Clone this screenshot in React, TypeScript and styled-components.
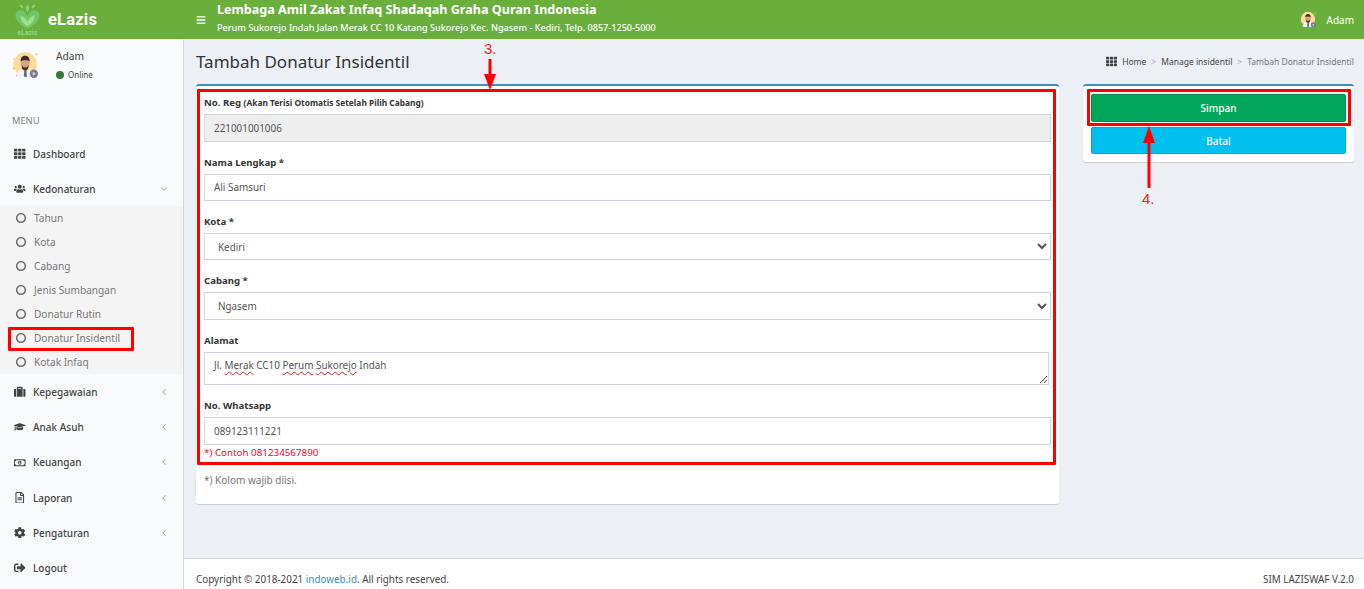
import React from "react";
import styled, { createGlobalStyle } from "styled-components";
import { FaBars, FaTh, FaUsers, FaSuitcase, FaGraduationCap, FaRegMoneyBillAlt, FaRegFileAlt, FaCog, FaSignOutAlt, FaRegCircle } from "react-icons/fa";
import { ChevronDown, ChevronLeft } from "lucide-react";

const Global = createGlobalStyle`
  html, body { margin: 0; padding: 0; background: #ecf0f5; }
  body { font-family: "Noto Sans", "Open Sans", sans-serif; color: #333; overflow: hidden; }
  * { box-sizing: border-box; }
`;

const Page = styled.div`
  position: relative;
  width: 1364px;
  height: 589px;
  display: flex;
  flex-direction: column;
  overflow: hidden;
`;
const Header = styled.header`
  height: 39px;
  flex: none;
  background: #6aae3c;
  color: #fff;
  display: flex;
  align-items: center;
`;
const Brand = styled.div`
  width: 184px;
  height: 39px;
  flex: none;
  display: flex;
  align-items: center;
  padding-left: 14px;
  gap: 7px;
  font-family: Roboto, sans-serif;
  font-weight: 700;
  font-size: 16.5px;
  letter-spacing: 0.2px;
`;
const Toggle = styled.div`
  width: 33px;
  flex: none;
  padding-left: 12px;
  display: flex;
  font-size: 10px;
`;
const TitleBlock = styled.div`
  flex: 1;
  display: flex;
  flex-direction: column;
  gap: 4px;
  padding-bottom: 5px;
`;
const OrgName = styled.div`
  font-weight: 700;
  font-size: 12.6px;
  line-height: 17px;
`;
const OrgAddress = styled.div`
  font-size: 9.1px;
  line-height: 12px;
  font-weight: 500;
`;
const TopUser = styled.div`
  display: flex;
  align-items: center;
  gap: 10px;
  padding-right: 10px;
  font-size: 10px;
`;
const Body = styled.div`
  flex: 1;
  display: flex;
  min-height: 0;
`;
const Sidebar = styled.aside`
  width: 184px;
  flex: none;
  background: #f9fafc;
  border-right: 1px solid #d2d6de;
`;
const UserPanel = styled.div`
  height: 72px;
  display: flex;
  padding: 12px 0 0 12px;
  gap: 16px;
`;
const UserInfo = styled.div`
  display: flex;
  flex-direction: column;
  margin-top: -2px;
`;
const UserName = styled.div`
  font-size: 10.2px;
  line-height: 14px;
  color: #444;
`;
const UserStatus = styled.div`
  display: flex;
  align-items: center;
  gap: 4px;
  margin-top: 6px;
  font-size: 8px;
  line-height: 12px;
  color: #444;
`;
const StatusDot = styled.span`
  width: 8px;
  height: 8px;
  border-radius: 50%;
  background: #3c763d;
`;
const MenuHeading = styled.div`
  height: 25px;
  padding-left: 12px;
  font-size: 9.3px;
  line-height: 20px;
  color: #848484;
`;
const NavItem = styled.div`
  height: 35.2px;
  display: flex;
  align-items: center;
  padding: 0 14px;
  font-size: 10px;
  font-weight: 500;
  color: #444;
`;
const NavIcon = styled.span`
  width: 19px;
  flex: none;
  display: flex;
  font-size: 11.5px;
  color: #444;
`;
const NavLabel = styled.span`
  flex: 1;
`;
const Caret = styled.span`
  display: flex;
  color: #8a8a8a;
`;
const SubMenu = styled.div`
  background: #f4f4f5;
`;
const SubItem = styled.div`
  height: 24px;
  display: flex;
  align-items: center;
  padding-left: 16px;
  gap: 8px;
  font-size: 10.1px;
  color: #777;
  svg { font-size: 10px; color: #5f5f5f; flex: none; stroke: currentColor; stroke-width: 24px; }
`;
const Main = styled.main`
  flex: 1;
  min-width: 0;
  display: flex;
  flex-direction: column;
`;
const Content = styled.div`
  flex: 1;
  padding: 0 10px 0 12px;
`;
const PageHead = styled.div`
  height: 45px;
  display: flex;
  justify-content: space-between;
  align-items: center;
`;
const PageTitle = styled.h1`
  margin: 0;
  font-size: 17px;
  font-weight: 400;
  color: #333;
`;
const Crumbs = styled.div`
  display: flex;
  align-items: center;
  gap: 5px;
  font-size: 8.5px;
  color: #444;
  svg { font-size: 11px; }
`;
const CrumbSep = styled.span`
  color: #aaa;
`;
const CrumbCurrent = styled.span`
  color: #777;
`;
const Columns = styled.div`
  display: flex;
  align-items: flex-start;
  gap: 24px;
`;
const FormBox = styled.section`
  width: 863px;
  height: 420px;
  flex: none;
  background: #fff;
  border-top: 2px solid #3c8dbc;
  border-radius: 3px;
  box-shadow: 0 1px 1px rgba(0,0,0,0.15);
  padding: 8.2px 8px 0;
`;
const SideBox = styled.section`
  width: 271px;
  height: 78px;
  flex: none;
  background: #fff;
  border-top: 2px solid #3c8dbc;
  border-radius: 3px;
  box-shadow: 0 1px 1px rgba(0,0,0,0.15);
  padding: 8px 8px 0;
  display: flex;
  flex-direction: column;
  gap: 5px;
`;
const Field = styled.div`
  margin-bottom: 12px;
`;
const Label = styled.label`
  display: block;
  height: 20px;
  font-size: 9.6px;
  line-height: 18px;
  font-weight: 700;
  color: #333;
`;
const LabelHint = styled.span`
  font-size: 8.4px;
`;
const TextInput = styled.input`
  display: block;
  width: 100%;
  height: 27.4px;
  border: 1px solid #d2d6de;
  background: ${(p) => (p.readOnly ? "#eeeeee" : "#fff")};
  padding: 0 9px;
  font-family: inherit;
  font-size: 9.9px;
  color: #555;
  outline: none;
`;
const Picker = styled.select`
  display: block;
  width: 100%;
  height: 27.4px;
  border: 1px solid #d2d6de;
  border-radius: 0;
  background: #fff;
  padding: 0 9px;
  font-family: inherit;
  font-size: 9.9px;
  color: #555;
  outline: none;
`;
const AreaBox = styled.div`
  width: 845px;
  height: 33.5px;
  border: 1px solid #d2d6de;
  padding: 5px 9px;
  font-size: 9.9px;
  line-height: 14px;
  color: #555;
  resize: vertical;
  overflow: hidden;
`;
const Misspelt = styled.span`
  text-decoration: underline wavy #e02020 1px;
  text-underline-offset: 2px;
`;
const Helper = styled.div`
  font-size: 9.8px;
  line-height: 16px;
  color: #ee0a2a;
`;
const Note = styled.div`
  margin-top: 11px;
  font-size: 10px;
  line-height: 16px;
  color: #777;
`;
const ActionButton = styled.button<{ $bg: string; $line: string; $h: number }>`
  height: ${(p) => p.$h}px;
  flex: none;
  border: 1px solid ${(p) => p.$line};
  border-radius: 2px;
  background: ${(p) => p.$bg};
  color: #fff;
  font-family: inherit;
  font-size: 10px;
  font-weight: 500;
`;
const Footer = styled.footer`
  height: 31px;
  flex: none;
  background: #fff;
  border-top: 1px solid #d2d6de;
  display: flex;
  justify-content: space-between;
  align-items: flex-end;
  padding: 0 10px 3px 12px;
  font-size: 9.9px;
  line-height: 14px;
  color: #444;
`;
const Link = styled.span`
  color: #3c8dbc;
`;
const Mark = styled.div<{ $x: number; $y: number; $w: number; $h: number }>`
  position: absolute;
  left: ${(p) => p.$x}px;
  top: ${(p) => p.$y}px;
  width: ${(p) => p.$w}px;
  height: ${(p) => p.$h}px;
  border: 3px solid #fe0000;
  border-radius: 1px;
  pointer-events: none;
`;
const Callout = styled.div<{ $x: number; $y: number }>`
  position: absolute;
  left: ${(p) => p.$x}px;
  top: ${(p) => p.$y}px;
  font-family: "Liberation Sans", sans-serif;
  font-size: 15px;
  line-height: 16px;
  color: #f02020;
`;
const ArrowArt = styled.svg<{ $x: number; $y: number }>`
  position: absolute;
  left: ${(p) => p.$x}px;
  top: ${(p) => p.$y}px;
`;
const LogoText = styled.text`
  font-family: Roboto, sans-serif;
  font-size: 6.5px;
  font-weight: 700;
  fill: #8fdc7e;
`;

const Avatar = ({ size }: { size: number }) => (
  <svg width={size} height={size} viewBox="0 0 32 32">
    <circle cx="15" cy="15" r="13.5" fill="#fbdc9e" />
    <path d="M5 29c1-6 4-8.500 10-8.500s9 2.500 9.500 8.500c-3 1.500-16 1.500-19.500 0z" fill="#f4f4f4" />
    <path d="M14 21h2.500l.5 8.500h-3.500z" fill="#5a6a78" />
    <ellipse cx="15" cy="13.500" rx="5" ry="6" fill="#d9a27c" />
    <path d="M9.800 12c0-5 2.400-6.500 5.200-6.500S20.200 7 20.200 12c-1.500-2-8.900-2-10.400 0z" fill="#3e2b25" />
    <path d="M11 15c.5 5 7.500 5 8 0 0 6-1.500 7-4 7s-4-1-4-7z" fill="#4a322a" />
    <circle cx="25" cy="26" r="4.800" fill="#7b7f93" />
    <circle cx="25" cy="26" r="1.700" fill="#c9ccd6" />
    <circle cx="28" cy="4" r="1.300" fill="#f6d860" />
    <circle cx="2" cy="20" r="1.300" fill="#f6c860" />
    <circle cx="2" cy="9" r=".8" fill="#f3a0a0" />
    <circle cx="5" cy="28" r=".8" fill="#f3a0a0" />
  </svg>
);

const Logo = () => (
  <svg width="27" height="33" viewBox="0 0 27 33">
    <path d="M13.500 26C5 21 .8 16 1.500 11.500 2.300 7.500 7 6 10 8.500c1.500 1.200 2.800 3 3.500 5 .7-2 2-3.800 3.500-5 3-2.500 7.700-1 8.500 3C26.200 16 22 21 13.500 26z" fill="#6fc76a" />
    <path d="M13.500 23.500C9 20.500 6 16.500 6.500 12.500c3 .5 5.500 3 7 6.500 1.500-3.500 4-6 7-6.500.5 4-2.500 8-7 11z" fill="#9fe08c" />
    <path d="M13.500 9c-2-1.800-2.200-5 0-7.500 2.200 2.500 2 5.700 0 7.500zM8.500 5.500C6.800 5 5.800 3.300 5.800 1.800c1.900 0 3.300 1.400 3.600 2.700zM18.500 5.500c1.700-.5 2.700-2.200 2.700-3.700-1.900 0-3.300 1.400-3.600 2.700z" fill="#8fd07a" />
    <LogoText x="13.500" y="32" textAnchor="middle">eLazis</LogoText>
  </svg>
);

const Arrow = ({ x, y, h, dir }: { x: number; y: number; h: number; dir: "up" | "down" }) => (
  <ArrowArt $x={x} $y={y} width="14" height={h} viewBox={`0 0 14 ${h}`}>
    {dir === "down" ? (
      <>
        <rect x="5.500" y="0" width="3" height={h - 10} fill="#fe0000" />
        <path d={`M1 ${h - 16}h12L7 ${h}z`} fill="#fe0000" />
      </>
    ) : (
      <>
        <rect x="5.500" y="10" width="3" height={h - 10} fill="#fe0000" />
        <path d="M1 17h12L7 0z" fill="#fe0000" />
      </>
    )}
  </ArrowArt>
);

const subs = ["Tahun", "Kota", "Cabang", "Jenis Sumbangan", "Donatur Rutin", "Donatur Insidentil", "Kotak Infaq"];
const lower = [
  { icon: <FaSuitcase />, label: "Kepegawaian" },
  { icon: <FaGraduationCap />, label: "Anak Asuh" },
  { icon: <FaRegMoneyBillAlt />, label: "Keuangan" },
  { icon: <FaRegFileAlt />, label: "Laporan" },
  { icon: <FaCog />, label: "Pengaturan" },
];

export default function App() {
  return (
    <Page>
      <Global />
      <Header>
        <Brand>
          <Logo />
          eLazis
        </Brand>
        <Toggle><FaBars /></Toggle>
        <TitleBlock>
          <OrgName>Lembaga Amil Zakat Infaq Shadaqah Graha Quran Indonesia</OrgName>
          <OrgAddress>Perum Sukorejo Indah Jalan Merak CC 10 Katang Sukorejo Kec. Ngasem - Kediri, Telp. 0857-1250-5000</OrgAddress>
        </TitleBlock>
        <TopUser>
          <Avatar size={17} />
          Adam
        </TopUser>
      </Header>
      <Body>
        <Sidebar>
          <UserPanel>
            <Avatar size={28} />
            <UserInfo>
              <UserName>Adam</UserName>
              <UserStatus><StatusDot />Online</UserStatus>
            </UserInfo>
          </UserPanel>
          <MenuHeading>MENU</MenuHeading>
          <NavItem><NavIcon><FaTh /></NavIcon><NavLabel>Dashboard</NavLabel></NavItem>
          <NavItem>
            <NavIcon><FaUsers /></NavIcon>
            <NavLabel>Kedonaturan</NavLabel>
            <Caret><ChevronDown size={10} /></Caret>
          </NavItem>
          <SubMenu>
            {subs.map((s) => (
              <SubItem key={s}><FaRegCircle />{s}</SubItem>
            ))}
          </SubMenu>
          {lower.map((n) => (
            <NavItem key={n.label}>
              <NavIcon>{n.icon}</NavIcon>
              <NavLabel>{n.label}</NavLabel>
              <Caret><ChevronLeft size={10} /></Caret>
            </NavItem>
          ))}
          <NavItem><NavIcon><FaSignOutAlt /></NavIcon><NavLabel>Logout</NavLabel></NavItem>
        </Sidebar>
        <Main>
          <Content>
            <PageHead>
              <PageTitle>Tambah Donatur Insidentil</PageTitle>
              <Crumbs>
                <FaTh />
                <span>Home</span>
                <CrumbSep>&gt;</CrumbSep>
                <span>Manage insidentil</span>
                <CrumbSep>&gt;</CrumbSep>
                <CrumbCurrent>Tambah Donatur Insidentil</CrumbCurrent>
              </Crumbs>
            </PageHead>
            <Columns>
              <FormBox>
                <Field>
                  <Label>No. Reg <LabelHint>(Akan Terisi Otomatis Setelah Pilih Cabang)</LabelHint></Label>
                  <TextInput readOnly value="221001001006" />
                </Field>
                <Field>
                  <Label>Nama Lengkap *</Label>
                  <TextInput defaultValue="Ali Samsuri" />
                </Field>
                <Field>
                  <Label>Kota *</Label>
                  <Picker defaultValue="Kediri"><option>Kediri</option></Picker>
                </Field>
                <Field>
                  <Label>Cabang *</Label>
                  <Picker defaultValue="Ngasem"><option>Ngasem</option></Picker>
                </Field>
                <Field>
                  <Label>Alamat</Label>
                  <AreaBox>Jl. <Misspelt>Merak</Misspelt> CC10 <Misspelt>Perum</Misspelt> <Misspelt>Sukorejo</Misspelt> Indah</AreaBox>
                </Field>
                <div>
                  <Label>No. Whatsapp</Label>
                  <TextInput defaultValue="089123111221" />
                  <Helper>*) Contoh 081234567890</Helper>
                </div>
                <Note>*) Kolom wajib diisi.</Note>
              </FormBox>
              <SideBox>
                <ActionButton $bg="#00a65a" $line="#008d4c" $h={28}>Simpan</ActionButton>
                <ActionButton $bg="#00c0ef" $line="#00acd6" $h={27}>Batal</ActionButton>
              </SideBox>
            </Columns>
          </Content>
          <Footer>
            <span>Copyright © 2018-2021 <Link>indoweb.id</Link>. All rights reserved.</span>
            <span>SIM LAZISWAF V.2.0</span>
          </Footer>
        </Main>
      </Body>

      <Mark $x={197} $y={89} $w={859} $h={376} />
      <Mark $x={1087} $y={89} $w={264} $h={37} />
      <Mark $x={8} $y={327} $w={126} $h={24} />
      <Callout $x={484} $y={41}>3.</Callout>
      <Arrow x={483} y={59} h={31} dir="down" />
      <Arrow x={1142} y={126} h={62} dir="up" />
      <Callout $x={1142} $y={191}>4.</Callout>
    </Page>
  );
}
